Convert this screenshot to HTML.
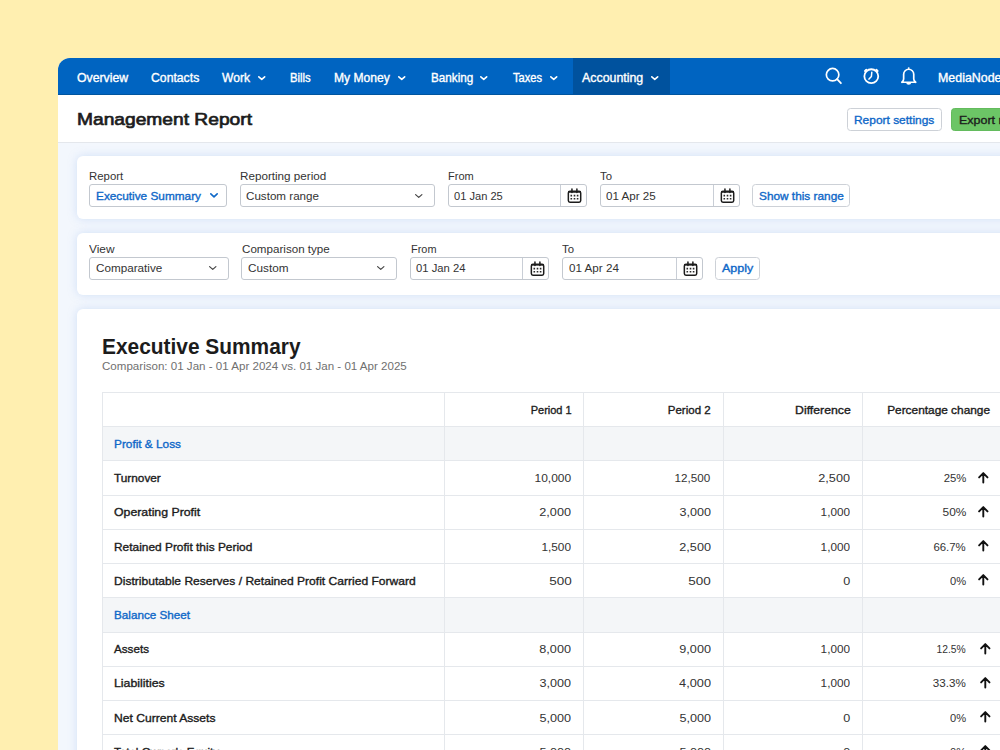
<!DOCTYPE html>
<html lang="en">
<head>
<meta charset="utf-8">
<title>Management Report</title>
<style>
*{box-sizing:border-box;margin:0;padding:0}
html,body{width:1000px;height:750px;overflow:hidden}
body{background:#ffefb0;font-family:"Liberation Sans",sans-serif;color:#1c1c1c;position:relative}
.win{position:absolute;left:58px;top:58px;width:1100px;height:800px;background:#f3f7fd;border-top-left-radius:12px;overflow:hidden}
.t{position:absolute;line-height:20px;white-space:nowrap;display:block}
.m{-webkit-text-stroke:.35px currentColor}
  .m2{-webkit-text-stroke:.7px currentColor;color:#1c1c1c}
.w{color:#fff}.b{color:#0f68c8}.d{color:#1c1c1c}.g{color:#333}.s{color:#707070}
.ic{position:absolute;overflow:visible}
.nav{position:absolute;left:0;top:0;width:100%;height:37px;background:#0064c1;border-bottom:1px solid #00559f}
.act{position:absolute;left:514.5px;top:0;width:97.5px;height:37px;background:#00529e}
.hdr{position:absolute;left:0;top:37px;width:100%;height:47.5px;background:#fff;border-bottom:1px solid #e4e7ec}
.btn{position:absolute;height:23px;border:1px solid #cdd1d7;border-radius:3.5px;background:#fff}
.card{position:absolute;left:19px;width:1100px;background:#fff;border-radius:6px;box-shadow:0 0 10px rgba(140,180,235,.34)}
.inp{position:absolute;height:22.5px;border:1px solid #c3c8cf;border-radius:3px;background:#fff}
.cal{position:absolute;right:0;top:0;width:26px;height:20.5px;border-left:1px solid #c9ced6}
.tbl{position:absolute;left:44px;top:334.5px;width:1100px;height:500px}
.r{position:absolute;left:0;width:100%;height:34.22px;border-top:1px solid #e5e8ec}
.r.sec{background:#f4f6f8}
.vl{position:absolute;top:0;width:1px;height:500px;background:#e5e8ec}
</style>
</head>
<body>
<div class="win">
<div class="nav"><div class="act"></div>
<span class="t w m" style="top:9.64px;font-size:11.9px;left:18.72px;transform:scaleX(1.0330);transform-origin:0 50%;">Overview</span>
<span class="t w m" style="top:9.64px;font-size:11.9px;left:92.57px;transform:scaleX(1.0280);transform-origin:0 50%;">Contacts</span>
<span class="t w m" style="top:9.64px;font-size:11.9px;left:163.82px;transform:scaleX(1.0170);transform-origin:0 50%;">Work</span>
<span class="t w m" style="top:9.64px;font-size:11.9px;left:232.33px;transform:scaleX(0.9513);transform-origin:0 50%;">Bills</span>
<span class="t w m" style="top:9.64px;font-size:11.9px;left:276.07px;transform:scaleX(1.0165);transform-origin:0 50%;">My Money</span>
<span class="t w m" style="top:9.64px;font-size:11.9px;left:372.57px;transform:scaleX(0.9829);transform-origin:0 50%;">Banking</span>
<span class="t w m" style="top:9.64px;font-size:11.9px;left:454.83px;transform:scaleX(0.9336);transform-origin:0 50%;">Taxes</span>
<span class="t w m" style="top:9.64px;font-size:11.9px;left:523.81px;transform:scaleX(1.0409);transform-origin:0 50%;">Accounting</span>
<span class="t w m" style="top:9.64px;font-size:11.9px;left:879.81px;transform:scaleX(1.0442);transform-origin:0 50%;">MediaNode</span>
<svg class="ic" style="left:199.50px;top:18.00px;width:7.5px;height:4.2px" viewBox="0 0 7.5 4.2"><path d="M0.80 0.80 3.75 3.40 6.70 0.80" fill="none" stroke="#fff" stroke-width="1.6" stroke-linecap="round" stroke-linejoin="round"/></svg>
<svg class="ic" style="left:339.50px;top:18.00px;width:7.5px;height:4.2px" viewBox="0 0 7.5 4.2"><path d="M0.80 0.80 3.75 3.40 6.70 0.80" fill="none" stroke="#fff" stroke-width="1.6" stroke-linecap="round" stroke-linejoin="round"/></svg>
<svg class="ic" style="left:422.00px;top:18.00px;width:7.5px;height:4.2px" viewBox="0 0 7.5 4.2"><path d="M0.80 0.80 3.75 3.40 6.70 0.80" fill="none" stroke="#fff" stroke-width="1.6" stroke-linecap="round" stroke-linejoin="round"/></svg>
<svg class="ic" style="left:491.50px;top:18.00px;width:7.5px;height:4.2px" viewBox="0 0 7.5 4.2"><path d="M0.80 0.80 3.75 3.40 6.70 0.80" fill="none" stroke="#fff" stroke-width="1.6" stroke-linecap="round" stroke-linejoin="round"/></svg>
<svg class="ic" style="left:592.75px;top:18.00px;width:7.5px;height:4.2px" viewBox="0 0 7.5 4.2"><path d="M0.80 0.80 3.75 3.40 6.70 0.80" fill="none" stroke="#fff" stroke-width="1.6" stroke-linecap="round" stroke-linejoin="round"/></svg>
<svg class="ic" style="left:765px;top:7px;width:22px;height:22px" viewBox="0 0 22 22"><circle cx="9.6" cy="9.7" r="6.25" fill="none" stroke="#fff" stroke-width="1.7"/><path d="M14.1 14.2 17.9 18.2" stroke="#fff" stroke-width="1.8" stroke-linecap="round"/></svg>
<svg class="ic" style="left:803px;top:8px;width:22px;height:22px" viewBox="0 0 22 22"><circle cx="10.3" cy="10.2" r="6.95" fill="none" stroke="#fff" stroke-width="1.8"/><path d="M10.8 6.3 10.4 10.5 8 13.1" fill="none" stroke="#fff" stroke-width="1.5" stroke-linecap="round" stroke-linejoin="round"/><path d="M4.0 5.0 5.3 3.7M15.3 3.7 16.6 5.0" stroke="#fff" stroke-width="1.9" stroke-linecap="round"/></svg>
<svg class="ic" style="left:841px;top:7px;width:22px;height:22px" viewBox="0 0 22 22"><path d="M2.9 17.25H16.7M2.9 17.25C4 16.3 4.65 15.5 4.65 14V9.3A5.05 5.05 0 0 1 14.75 9.3V14C14.75 15.5 15.4 16.3 16.7 17.25" fill="none" stroke="#fff" stroke-width="1.7" stroke-linecap="round" stroke-linejoin="round"/><circle cx="9.7" cy="3.1" r=".95" fill="#fff"/><path d="M7.3 18h4.8a2.4 1.7 0 0 1-4.8 0z" fill="#fff"/></svg>
</div>
<div class="hdr"></div>
<div class="btn" style="left:789.20px;top:49.60px;width:94.40px;"></div>
<div class="btn" style="left:892.50px;top:49.60px;width:129.50px;background:#6cc566;border-color:#63bb5d"></div>
<span class="t m2" style="top:51.84px;font-size:17px;left:19.11px;transform:scaleX(1.1291);transform-origin:0 50%;">Management Report</span>
<span class="t b m" style="top:51.54px;font-size:11.2px;left:796.12px;transform:scaleX(1.0671);transform-origin:0 50%;">Report settings</span>
<span class="t d m" style="top:51.54px;font-size:11.2px;left:900.51px;transform:scaleX(1.1133);transform-origin:0 50%;">Export report</span>
<div class="card" style="top:97.70px;height:63.2px"></div>
<div class="inp" style="left:31.00px;top:126.40px;width:138.20px"></div>
<div class="inp" style="left:182.20px;top:126.40px;width:194.40px"></div>
<div class="inp" style="left:389.50px;top:126.40px;width:139.30px"><div class="cal"><svg class="ic" style="left:6.2px;top:2.9px;width:15px;height:16px" viewBox="0 0 15 16"><rect x="1.35" y="3.3" width="12.35" height="10.85" rx="1.6" fill="none" stroke="#1c1c1c" stroke-width="1.5"/><path d="M1.4 4.1H13.6" stroke="#1c1c1c" stroke-width="1.1"/><path d="M4.95 1.1V4.6M9.9 1.1V4.6" stroke="#1c1c1c" stroke-width="1.5" stroke-linecap="round"/><path d="M3.5 7.6h1.6M6.7 7.6h1.6M9.8 7.6h1.6M3.5 10.7h1.6M6.7 10.7h1.6M9.8 10.7h1.6" stroke="#2a2a2a" stroke-width="1.6"/></svg></div></div>
<div class="inp" style="left:542.20px;top:126.40px;width:139.40px"><div class="cal"><svg class="ic" style="left:6.2px;top:2.9px;width:15px;height:16px" viewBox="0 0 15 16"><rect x="1.35" y="3.3" width="12.35" height="10.85" rx="1.6" fill="none" stroke="#1c1c1c" stroke-width="1.5"/><path d="M1.4 4.1H13.6" stroke="#1c1c1c" stroke-width="1.1"/><path d="M4.95 1.1V4.6M9.9 1.1V4.6" stroke="#1c1c1c" stroke-width="1.5" stroke-linecap="round"/><path d="M3.5 7.6h1.6M6.7 7.6h1.6M9.8 7.6h1.6M3.5 10.7h1.6M6.7 10.7h1.6M9.8 10.7h1.6" stroke="#2a2a2a" stroke-width="1.6"/></svg></div></div>
<div class="btn" style="left:694.40px;top:126.30px;width:97.80px;"></div>
<svg class="ic" style="left:152.40px;top:135.10px;width:8px;height:4.6px" viewBox="0 0 8 4.6"><path d="M0.80 0.80 4.00 3.80 7.20 0.80" fill="none" stroke="#0f68c8" stroke-width="1.6" stroke-linecap="round" stroke-linejoin="round"/></svg>
<svg class="ic" style="left:356.50px;top:135.80px;width:7.5px;height:4px" viewBox="0 0 7.5 4"><path d="M0.60 0.60 3.75 3.40 6.90 0.60" fill="none" stroke="#444" stroke-width="1.2" stroke-linecap="round" stroke-linejoin="round"/></svg>
<span class="t g" style="top:107.84px;font-size:11.2px;left:31.23px;transform:scaleX(1.0180);transform-origin:0 50%;">Report</span>
<span class="t g" style="top:107.84px;font-size:11.2px;left:182.32px;transform:scaleX(1.0427);transform-origin:0 50%;">Reporting period</span>
<span class="t g" style="top:107.84px;font-size:11.2px;left:389.53px;transform:scaleX(0.9862);transform-origin:0 50%;">From</span>
<span class="t g" style="top:107.84px;font-size:11.2px;left:541.83px;transform:scaleX(1.0145);transform-origin:0 50%;">To</span>
<span class="t b m" style="top:127.84px;font-size:11.2px;left:37.82px;transform:scaleX(1.0554);transform-origin:0 50%;">Executive Summary</span>
<span class="t g" style="top:127.84px;font-size:11.2px;left:188.33px;transform:scaleX(1.0387);transform-origin:0 50%;">Custom range</span>
<span class="t g" style="top:127.84px;font-size:11.2px;left:395.58px;transform:scaleX(0.9917);transform-origin:0 50%;">01 Jan 25</span>
<span class="t g" style="top:127.84px;font-size:11.2px;left:547.83px;transform:scaleX(1.0395);transform-origin:0 50%;">01 Apr 25</span>
<span class="t b m" style="top:127.84px;font-size:11.2px;left:700.82px;transform:scaleX(1.0569);transform-origin:0 50%;">Show this range</span>
<div class="card" style="top:174.60px;height:62.4px"></div>
<div class="inp" style="left:31.00px;top:199.00px;width:139.80px"></div>
<div class="inp" style="left:183.40px;top:199.00px;width:155.30px"></div>
<div class="inp" style="left:351.90px;top:199.00px;width:139.60px"><div class="cal"><svg class="ic" style="left:6.2px;top:2.9px;width:15px;height:16px" viewBox="0 0 15 16"><rect x="1.35" y="3.3" width="12.35" height="10.85" rx="1.6" fill="none" stroke="#1c1c1c" stroke-width="1.5"/><path d="M1.4 4.1H13.6" stroke="#1c1c1c" stroke-width="1.1"/><path d="M4.95 1.1V4.6M9.9 1.1V4.6" stroke="#1c1c1c" stroke-width="1.5" stroke-linecap="round"/><path d="M3.5 7.6h1.6M6.7 7.6h1.6M9.8 7.6h1.6M3.5 10.7h1.6M6.7 10.7h1.6M9.8 10.7h1.6" stroke="#2a2a2a" stroke-width="1.6"/></svg></div></div>
<div class="inp" style="left:504.00px;top:199.00px;width:140.50px"><div class="cal"><svg class="ic" style="left:6.2px;top:2.9px;width:15px;height:16px" viewBox="0 0 15 16"><rect x="1.35" y="3.3" width="12.35" height="10.85" rx="1.6" fill="none" stroke="#1c1c1c" stroke-width="1.5"/><path d="M1.4 4.1H13.6" stroke="#1c1c1c" stroke-width="1.1"/><path d="M4.95 1.1V4.6M9.9 1.1V4.6" stroke="#1c1c1c" stroke-width="1.5" stroke-linecap="round"/><path d="M3.5 7.6h1.6M6.7 7.6h1.6M9.8 7.6h1.6M3.5 10.7h1.6M6.7 10.7h1.6M9.8 10.7h1.6" stroke="#2a2a2a" stroke-width="1.6"/></svg></div></div>
<div class="btn" style="left:657.00px;top:199.00px;width:45.00px;"></div>
<svg class="ic" style="left:151.20px;top:208.40px;width:7.5px;height:4px" viewBox="0 0 7.5 4"><path d="M0.60 0.60 3.75 3.40 6.90 0.60" fill="none" stroke="#444" stroke-width="1.2" stroke-linecap="round" stroke-linejoin="round"/></svg>
<svg class="ic" style="left:319.00px;top:208.40px;width:7.5px;height:4px" viewBox="0 0 7.5 4"><path d="M0.60 0.60 3.75 3.40 6.90 0.60" fill="none" stroke="#444" stroke-width="1.2" stroke-linecap="round" stroke-linejoin="round"/></svg>
<span class="t g" style="top:181.14px;font-size:11.2px;left:31.32px;transform:scaleX(1.0604);transform-origin:0 50%;">View</span>
<span class="t g" style="top:181.14px;font-size:11.2px;left:184.03px;transform:scaleX(1.0381);transform-origin:0 50%;">Comparison type</span>
<span class="t g" style="top:181.14px;font-size:11.2px;left:352.54px;transform:scaleX(0.9767);transform-origin:0 50%;">From</span>
<span class="t g" style="top:181.14px;font-size:11.2px;left:504.33px;transform:scaleX(1.0145);transform-origin:0 50%;">To</span>
<span class="t g" style="top:200.24px;font-size:11.2px;left:37.57px;transform:scaleX(1.0446);transform-origin:0 50%;">Comparative</span>
<span class="t g" style="top:200.24px;font-size:11.2px;left:190.02px;transform:scaleX(1.0507);transform-origin:0 50%;">Custom</span>
<span class="t g" style="top:200.24px;font-size:11.2px;left:357.63px;transform:scaleX(1.0070);transform-origin:0 50%;">01 Jan 24</span>
<span class="t g" style="top:200.24px;font-size:11.2px;left:510.57px;transform:scaleX(1.0437);transform-origin:0 50%;">01 Apr 24</span>
<span class="t b m" style="top:200.24px;font-size:11.2px;left:663.81px;transform:scaleX(1.1161);transform-origin:0 50%;">Apply</span>
<div class="card" style="top:250.70px;height:600px"></div>
<span class="t d" style="top:278.91px;font-size:21.7px;left:44.49px;transform:scaleX(0.9629);transform-origin:0 50%;font-weight:bold;">Executive Summary</span>
<span class="t s" style="top:298.27px;font-size:11.4px;left:44.03px;transform:scaleX(1.0155);transform-origin:0 50%;">Comparison: 01 Jan - 01 Apr 2024 vs. 01 Jan - 01 Apr 2025</span>
<div class="tbl" style="left:44px;top:334.00px">
<div class="r" style="top:0.00px">
<span class="t d m" style="top:6.74px;font-size:11.2px;left:427.89px;transform:scaleX(0.9839);transform-origin:100% 50%;">Period 1</span>
<span class="t d m" style="top:6.74px;font-size:11.2px;left:567.00px;transform:scaleX(1.0295);transform-origin:100% 50%;">Period 2</span>
<span class="t d m" style="top:6.74px;font-size:11.2px;left:697.58px;transform:scaleX(1.0965);transform-origin:100% 50%;">Difference</span>
<span class="t d m" style="top:6.74px;font-size:11.2px;left:790.52px;transform:scaleX(1.0603);transform-origin:100% 50%;">Percentage change</span>
</div>
<div class="r sec" style="top:34.22px">
<span class="t b m" style="top:6.74px;font-size:11.2px;left:11.82px;transform:scaleX(1.0564);transform-origin:0 50%;">Profit &amp; Loss</span>
</div>
<div class="r" style="top:68.44px">
<span class="t d m" style="top:6.74px;font-size:11.2px;left:11.82px;transform:scaleX(1.0550);transform-origin:0 50%;">Turnover</span>
<span class="t g" style="top:6.74px;font-size:11.2px;left:435.15px;transform:scaleX(1.0725);transform-origin:100% 50%;">10,000</span>
<span class="t g" style="top:6.74px;font-size:11.2px;left:574.35px;transform:scaleX(1.0433);transform-origin:100% 50%;">12,500</span>
<span class="t g" style="top:6.74px;font-size:11.2px;left:719.88px;transform:scaleX(1.1321);transform-origin:100% 50%;">2,500</span>
<span class="t g" style="top:6.74px;font-size:11.2px;left:841.66px;transform:scaleX(1.0131);transform-origin:100% 50%;">25%</span>
<svg class="ic" style="left:875.70px;top:10.30px;width:10.6px;height:11.6px" viewBox="0 0 10.6 11.6"><path d="M5.3 10.6V1.6M1.1 5.4 5.3 1.1 9.5 5.4" fill="none" stroke="#111" stroke-width="1.9" stroke-linecap="round" stroke-linejoin="round"/></svg>
</div>
<div class="r" style="top:102.66px">
<span class="t d m" style="top:6.74px;font-size:11.2px;left:11.82px;transform:scaleX(1.1001);transform-origin:0 50%;">Operating Profit</span>
<span class="t g" style="top:6.74px;font-size:11.2px;left:441.38px;transform:scaleX(1.1321);transform-origin:100% 50%;">2,000</span>
<span class="t g" style="top:6.74px;font-size:11.2px;left:580.58px;transform:scaleX(1.1250);transform-origin:100% 50%;">3,000</span>
<span class="t g" style="top:6.74px;font-size:11.2px;left:719.87px;transform:scaleX(1.0500);transform-origin:100% 50%;">1,000</span>
<span class="t g" style="top:6.74px;font-size:11.2px;left:841.67px;transform:scaleX(1.0622);transform-origin:100% 50%;">50%</span>
<svg class="ic" style="left:875.70px;top:10.30px;width:10.6px;height:11.6px" viewBox="0 0 10.6 11.6"><path d="M5.3 10.6V1.6M1.1 5.4 5.3 1.1 9.5 5.4" fill="none" stroke="#111" stroke-width="1.9" stroke-linecap="round" stroke-linejoin="round"/></svg>
</div>
<div class="r" style="top:136.88px">
<span class="t d m" style="top:6.74px;font-size:11.2px;left:11.82px;transform:scaleX(1.0641);transform-origin:0 50%;">Retained Profit this Period</span>
<span class="t g" style="top:6.74px;font-size:11.2px;left:441.37px;transform:scaleX(1.0571);transform-origin:100% 50%;">1,500</span>
<span class="t g" style="top:6.74px;font-size:11.2px;left:580.58px;transform:scaleX(1.1321);transform-origin:100% 50%;">2,500</span>
<span class="t g" style="top:6.74px;font-size:11.2px;left:719.87px;transform:scaleX(1.0500);transform-origin:100% 50%;">1,000</span>
<span class="t g" style="top:6.74px;font-size:11.2px;left:832.33px;transform:scaleX(1.0178);transform-origin:100% 50%;">66.7%</span>
<svg class="ic" style="left:875.70px;top:10.30px;width:10.6px;height:11.6px" viewBox="0 0 10.6 11.6"><path d="M5.3 10.6V1.6M1.1 5.4 5.3 1.1 9.5 5.4" fill="none" stroke="#111" stroke-width="1.9" stroke-linecap="round" stroke-linejoin="round"/></svg>
</div>
<div class="r" style="top:171.10px">
<span class="t d m" style="top:6.74px;font-size:11.2px;left:11.82px;transform:scaleX(1.0783);transform-origin:0 50%;">Distributable Reserves / Retained Profit Carried Forward</span>
<span class="t g" style="top:6.74px;font-size:11.2px;left:450.71px;transform:scaleX(1.2050);transform-origin:100% 50%;">500</span>
<span class="t g" style="top:6.74px;font-size:11.2px;left:589.91px;transform:scaleX(1.2050);transform-origin:100% 50%;">500</span>
<span class="t g" style="top:6.74px;font-size:11.2px;left:741.64px;transform:scaleX(1.1228);transform-origin:100% 50%;">0</span>
<span class="t g" style="top:6.74px;font-size:11.2px;left:847.90px;transform:scaleX(0.9956);transform-origin:100% 50%;">0%</span>
<svg class="ic" style="left:875.70px;top:10.30px;width:10.6px;height:11.6px" viewBox="0 0 10.6 11.6"><path d="M5.3 10.6V1.6M1.1 5.4 5.3 1.1 9.5 5.4" fill="none" stroke="#111" stroke-width="1.9" stroke-linecap="round" stroke-linejoin="round"/></svg>
</div>
<div class="r sec" style="top:205.32px">
<span class="t b m" style="top:6.74px;font-size:11.2px;left:11.82px;transform:scaleX(1.0442);transform-origin:0 50%;">Balance Sheet</span>
</div>
<div class="r" style="top:239.54px">
<span class="t d m" style="top:6.74px;font-size:11.2px;left:11.82px;transform:scaleX(1.0423);transform-origin:0 50%;">Assets</span>
<span class="t g" style="top:6.74px;font-size:11.2px;left:441.38px;transform:scaleX(1.1321);transform-origin:100% 50%;">8,000</span>
<span class="t g" style="top:6.74px;font-size:11.2px;left:580.58px;transform:scaleX(1.1321);transform-origin:100% 50%;">9,000</span>
<span class="t g" style="top:6.74px;font-size:11.2px;left:719.87px;transform:scaleX(1.0500);transform-origin:100% 50%;">1,000</span>
<span class="t g" style="top:6.74px;font-size:11.2px;left:832.33px;transform:scaleX(0.9233);transform-origin:100% 50%;">12.5%</span>
<svg class="ic" style="left:877.50px;top:10.30px;width:10.6px;height:11.6px" viewBox="0 0 10.6 11.6"><path d="M5.3 10.6V1.6M1.1 5.4 5.3 1.1 9.5 5.4" fill="none" stroke="#111" stroke-width="1.9" stroke-linecap="round" stroke-linejoin="round"/></svg>
</div>
<div class="r" style="top:273.76px">
<span class="t d m" style="top:6.74px;font-size:11.2px;left:11.81px;transform:scaleX(1.1025);transform-origin:0 50%;">Liabilities</span>
<span class="t g" style="top:6.74px;font-size:11.2px;left:441.38px;transform:scaleX(1.1250);transform-origin:100% 50%;">3,000</span>
<span class="t g" style="top:6.74px;font-size:11.2px;left:580.58px;transform:scaleX(1.1393);transform-origin:100% 50%;">4,000</span>
<span class="t g" style="top:6.74px;font-size:11.2px;left:719.87px;transform:scaleX(1.0500);transform-origin:100% 50%;">1,000</span>
<span class="t g" style="top:6.74px;font-size:11.2px;left:832.34px;transform:scaleX(1.0399);transform-origin:100% 50%;">33.3%</span>
<svg class="ic" style="left:877.50px;top:10.30px;width:10.6px;height:11.6px" viewBox="0 0 10.6 11.6"><path d="M5.3 10.6V1.6M1.1 5.4 5.3 1.1 9.5 5.4" fill="none" stroke="#111" stroke-width="1.9" stroke-linecap="round" stroke-linejoin="round"/></svg>
</div>
<div class="r" style="top:307.98px">
<span class="t d m" style="top:6.74px;font-size:11.2px;left:11.82px;transform:scaleX(1.0810);transform-origin:0 50%;">Net Current Assets</span>
<span class="t g" style="top:6.74px;font-size:11.2px;left:441.38px;transform:scaleX(1.1286);transform-origin:100% 50%;">5,000</span>
<span class="t g" style="top:6.74px;font-size:11.2px;left:580.58px;transform:scaleX(1.1286);transform-origin:100% 50%;">5,000</span>
<span class="t g" style="top:6.74px;font-size:11.2px;left:741.64px;transform:scaleX(1.1228);transform-origin:100% 50%;">0</span>
<span class="t g" style="top:6.74px;font-size:11.2px;left:847.90px;transform:scaleX(0.9956);transform-origin:100% 50%;">0%</span>
<svg class="ic" style="left:877.50px;top:10.30px;width:10.6px;height:11.6px" viewBox="0 0 10.6 11.6"><path d="M5.3 10.6V1.6M1.1 5.4 5.3 1.1 9.5 5.4" fill="none" stroke="#111" stroke-width="1.9" stroke-linecap="round" stroke-linejoin="round"/></svg>
</div>
<div class="r" style="top:342.20px">
<span class="t d m" style="top:6.74px;font-size:11.2px;left:11.83px;transform:scaleX(1.0332);transform-origin:0 50%;">Total Owner&#x27;s Equity</span>
<span class="t g" style="top:6.74px;font-size:11.2px;left:441.38px;transform:scaleX(1.1286);transform-origin:100% 50%;">5,000</span>
<span class="t g" style="top:6.74px;font-size:11.2px;left:580.58px;transform:scaleX(1.1286);transform-origin:100% 50%;">5,000</span>
<span class="t g" style="top:6.74px;font-size:11.2px;left:741.64px;transform:scaleX(1.1228);transform-origin:100% 50%;">0</span>
<span class="t g" style="top:6.74px;font-size:11.2px;left:847.90px;transform:scaleX(0.9956);transform-origin:100% 50%;">0%</span>
<svg class="ic" style="left:877.50px;top:10.30px;width:10.6px;height:11.6px" viewBox="0 0 10.6 11.6"><path d="M5.3 10.6V1.6M1.1 5.4 5.3 1.1 9.5 5.4" fill="none" stroke="#111" stroke-width="1.9" stroke-linecap="round" stroke-linejoin="round"/></svg>
</div>
<div class="vl" style="left:-0.50px"></div>
<div class="vl" style="left:342.00px"></div>
<div class="vl" style="left:481.10px"></div>
<div class="vl" style="left:620.60px"></div>
<div class="vl" style="left:760.30px"></div>
</div>
</div>
</body>
</html>
